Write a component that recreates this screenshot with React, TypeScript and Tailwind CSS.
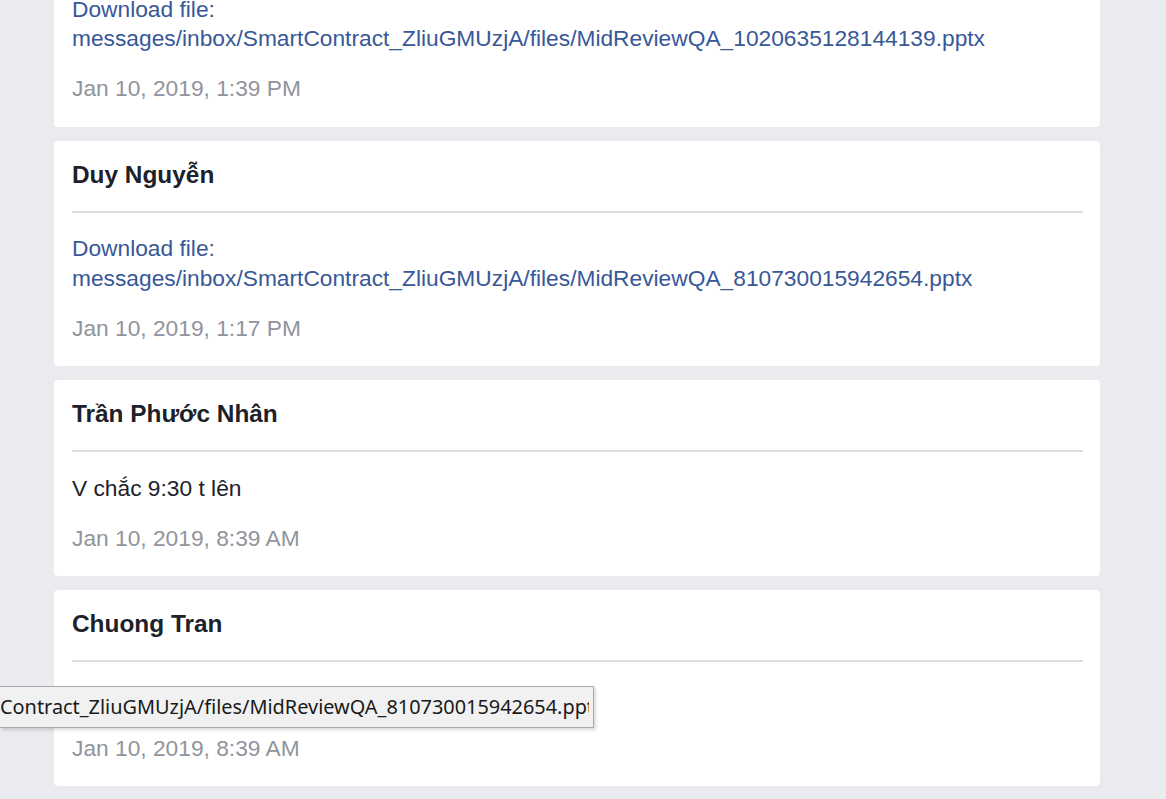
import React from "react";

type Message = {
  sender: string;
  date: string;
  file?: string;
  text?: string;
};

const messages: Message[] = [
  {
    sender: "Duy Nguyễn",
    date: "Jan 10, 2019, 1:39 PM",
    file: "messages/inbox/SmartContract_ZliuGMUzjA/files/MidReviewQA_1020635128144139.pptx",
  },
  {
    sender: "Duy Nguyễn",
    date: "Jan 10, 2019, 1:17 PM",
    file: "messages/inbox/SmartContract_ZliuGMUzjA/files/MidReviewQA_810730015942654.pptx",
  },
  {
    sender: "Trần Phước Nhân",
    date: "Jan 10, 2019, 8:39 AM",
    text: "V chắc 9:30 t lên",
  },
  {
    sender: "Chuong Tran",
    date: "Jan 10, 2019, 8:39 AM",
    text: "Ok mai t lên trễ chút, mấy đứa cứ lên trước nha",
  },
];

function MessageCard({ message, first }: { message: Message; first?: boolean }) {
  return (
    <div
      className={
        "w-[1046px] rounded-[4px] bg-white pl-[18px] pr-[17px] pt-[20px] pb-[23px] " +
        (first ? "mt-[-99px]" : "")
      }
    >
      <div className="border-b-2 border-[#dadde1] pb-[22px] text-[24.4px] font-bold leading-[28px] text-[#1d2129]">
        {message.sender}
      </div>
      <div className="mt-[21.5px] text-[22.75px] leading-[29.5px]">
        {message.file ? (
          <a href="#" className="text-[#385898]">
            Download file:
            <br />
            {message.file}
          </a>
        ) : (
          <span className="text-[#1d2129]">{message.text}</span>
        )}
      </div>
      <div className="mt-[20.5px] text-[22.75px] leading-[29.5px] text-[#90949c]">{message.date}</div>
    </div>
  );
}

export default function App() {
  return (
    <div
      className="relative h-[799px] overflow-hidden bg-[#e9ebee]"
      style={{ fontFamily: '"Liberation Sans", Arial, sans-serif' }}
    >
      <div className="flex flex-col gap-[14px] pl-[54px]">
        {messages.map((m, i) => (
          <MessageCard key={i} message={m} first={i === 0} />
        ))}
      </div>

      {/* native link tooltip */}
      <div className="absolute left-0 top-[686px] flex h-[42px] w-[594px] items-center border border-l-0 border-[#a9a9a9] bg-[#f1f1f1] shadow-[2px_2px_3px_rgba(0,0,0,0.15)]">
        <div className="w-[589px] overflow-hidden">
          <span
            className="whitespace-nowrap text-[19.9px] text-[#1a1a1a]"
            style={{ fontFamily: '"Noto Sans", "Open Sans", sans-serif' }}
          >
            Contract_ZliuGMUzjA/files/MidReviewQA_810730015942654.pptx
          </span>
        </div>
      </div>
    </div>
  );
}
